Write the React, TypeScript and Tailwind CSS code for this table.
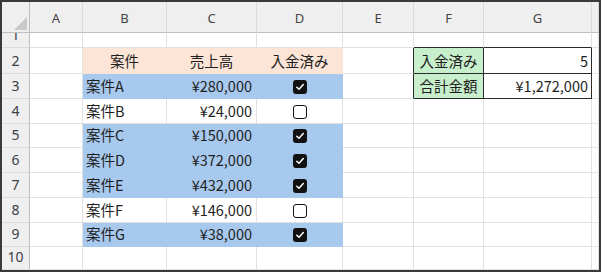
import { Fragment } from 'react'

interface Deal {
  name: string
  amount: string
  paid: boolean
}

const deals: Deal[] = [
  { name: '案件A', amount: '¥280,000', paid: true },
  { name: '案件B', amount: '¥24,000', paid: false },
  { name: '案件C', amount: '¥150,000', paid: true },
  { name: '案件D', amount: '¥372,000', paid: true },
  { name: '案件E', amount: '¥432,000', paid: true },
  { name: '案件F', amount: '¥146,000', paid: false },
  { name: '案件G', amount: '¥38,000', paid: true },
]

const letters = ['A', 'B', 'C', 'D', 'E', 'F', 'G', '']

const jp = "font-['Noto_Sans_CJK_JP','Noto_Sans',sans-serif]"
const ui = "font-['Noto_Sans','Liberation_Sans',sans-serif]"

function CheckBox({ checked }: { checked: boolean }) {
  if (!checked) {
    return <span className="block w-[14px] h-[14px] rounded-[3px] border-[1.5px] border-[#111] bg-white" />
  }
  return (
    <span className="flex w-[14px] h-[14px] rounded-[3px] bg-[#111] items-center justify-center">
      <svg width="10" height="10" viewBox="0 0 10 10">
        <path d="M1.8 5.2 L4 7.3 L8.3 2.6" fill="none" stroke="#fff" strokeWidth="1.5" strokeLinecap="round" strokeLinejoin="round" />
      </svg>
    </span>
  )
}

// plain grid cell: gridline on the right and bottom
function Cell({ className = '', children }: { className?: string; children?: React.ReactNode }) {
  return (
    <div className={`flex items-end overflow-hidden border-r border-b text-[14.5px] leading-[18px] text-[#1e1e1e] pb-[3px] ${jp} ${className}`}>
      {children}
    </div>
  )
}

function RowHeader({ n }: { n: number }) {
  return (
    <div className={`flex items-end justify-center overflow-hidden bg-[#efefef] border-r border-r-[#bfbfbf] border-b border-b-[#dcdcdc] pb-[4px] text-[14px] leading-[16px] text-[#3a3f48] ${ui}`}>
      {n}
    </div>
  )
}

const grid = 'border-[#e1e1e1]'
const box = 'border-r-[#2a2a2a] border-b-[#2a2a2a]'

export default function App() {
  return (
    <div className="w-[601px] h-[272px] bg-white border-2 border-[#3a3a3a]">
      <div className="grid grid-cols-[28px_53px_84px_90px_86px_71px_70px_108px_7px] grid-rows-[31px_15px_26px_25px_25px_24px_25px_25px_25px_24px_23px]">
        {/* column headers */}
        <div className="relative bg-[#efefef] border-r border-r-[#bfbfbf] border-b border-b-[#bfbfbf]">
          <svg className="absolute right-[2px] bottom-[2px]" width="13" height="13" viewBox="0 0 13 13">
            <path d="M13 0 L13 13 L0 13 Z" fill="#c9c9c9" />
          </svg>
        </div>
        {letters.map((l, i) => (
          <div
            key={i}
            className={`flex items-center justify-center bg-[#efefef] border-b border-b-[#bfbfbf] border-r border-r-[#dadada] text-[13px] text-[#444] pt-[4px] ${ui}`}
          >
            {l}
          </div>
        ))}

        {/* row 1 */}
        <RowHeader n={1} />
        <Cell className={grid} />
        <Cell className={grid} />
        <Cell className={grid} />
        <Cell className={grid} />
        <Cell className={grid} />
        <Cell className={`${grid} border-b-[#2a2a2a]`} />
        <Cell className={`${grid} border-b-[#2a2a2a]`} />
        <Cell className={grid} />

        {/* row 2: table headings + paid count */}
        <RowHeader n={2} />
        <Cell className={grid} />
        <Cell className="justify-center bg-[#fce4d6] border-[#fce4d6]">案件</Cell>
        <Cell className="justify-center bg-[#fce4d6] border-[#fce4d6]">売上高</Cell>
        <Cell className="justify-center bg-[#fce4d6] border-[#fce4d6]">入金済み</Cell>
        <Cell className={`${grid} border-r-[#2a2a2a]`} />
        <Cell className={`justify-center bg-[#c8efcb] ${box}`}>入金済み</Cell>
        <Cell className={`justify-end pr-[3px] ${box}`}>5</Cell>
        <Cell className={grid} />

        {deals.map((d, i) => {
          const row = i + 3
          const fill = d.paid ? 'bg-[#a8c9ee] border-[#a8c9ee]' : grid
          return (
            <Fragment key={d.name}>
              <RowHeader n={row} />
              <Cell className={grid} />
              <Cell className={`pl-[3px] ${fill}`}>{d.name}</Cell>
              <Cell className={`justify-end pr-[4px] ${fill}`}>{d.amount}</Cell>
              <div className={`flex items-center justify-center border-r border-b pt-[1px] ${fill}`}>
                <CheckBox checked={d.paid} />
              </div>
              {row === 3 ? (
                <>
                  <Cell className={`${grid} border-r-[#2a2a2a]`} />
                  <Cell className={`justify-center bg-[#c8efcb] ${box}`}>合計金額</Cell>
                  <Cell className={`justify-end pr-[3px] ${box}`}>¥1,272,000</Cell>
                </>
              ) : (
                <>
                  <Cell className={grid} />
                  <Cell className={grid} />
                  <Cell className={grid} />
                </>
              )}
              <Cell className={grid} />
            </Fragment>
          )
        })}

        {/* row 10 */}
        <RowHeader n={10} />
        {letters.map((_, i) => (
          <Cell key={i} className={grid} />
        ))}
      </div>
    </div>
  )
}
